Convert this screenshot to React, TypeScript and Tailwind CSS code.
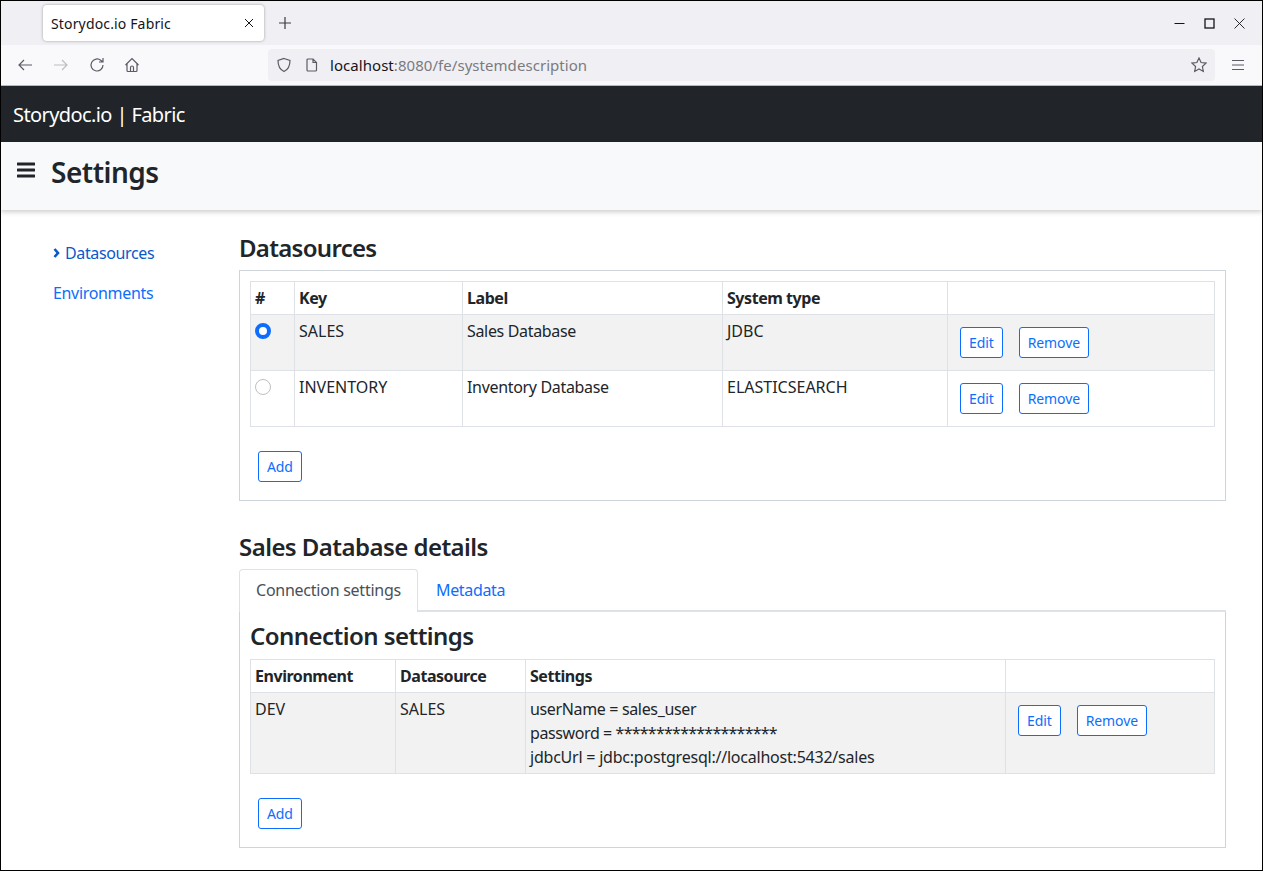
import React from 'react';

const FONT = "font-['Noto_Sans','Liberation_Sans',sans-serif]";
const BLUE = 'text-[#0d6efd]';

const OutlineButton = ({ label }: { label: string }) => (
  <button className={`h-[31px] px-2 rounded-[3px] border border-[#0d6efd] bg-white text-[14px] leading-[21px] tracking-[-0.1px] ${BLUE}`}>
    {label}
  </button>
);

const RowActions = () => (
  <div className="flex gap-4">
    <OutlineButton label="Edit" />
    <OutlineButton label="Remove" />
  </div>
);

const Th = ({ children }: { children?: React.ReactNode }) => (
  <th className="border border-[#dee2e6] px-1 py-1 h-[33px] text-left font-bold text-[16px] leading-6 tracking-[-0.45px] align-top text-[#212529]">{children}</th>
);

const Td = ({ children, caps }: { children?: React.ReactNode; caps?: boolean }) => (
  <td className={`border border-[#dee2e6] px-1 py-1 align-top text-[16px] leading-6 text-[#212529] ${caps ? 'tracking-[0px]' : 'tracking-[-0.33px]'}`}>{children}</td>
);

const Radio = ({ checked }: { checked?: boolean }) =>
  checked ? (
    <span className="block w-4 h-4 mt-[4px] rounded-full border-[4px] border-[#0d6efd] bg-white" />
  ) : (
    <span className="block w-4 h-4 mt-[4px] rounded-full border border-[#bfbfbf] bg-white" />
  );

const datasources = [
  { key: 'SALES', label: 'Sales Database', type: 'JDBC', checked: true },
  { key: 'INVENTORY', label: 'Inventory Database', type: 'ELASTICSEARCH', checked: false },
];

const BrowserChrome = () => (
  <div className="shrink-0">
    <div className="h-[44px] bg-[#f0f0f4] flex items-center">
      <div className="ml-[42px] w-[221px] h-[36px] bg-white rounded-[4px] shadow-[0_0_3px_rgba(0,0,0,0.35)] flex items-center justify-between pl-[8px] pr-[10px]">
        <span className="text-[14px] tracking-[0.15px] text-[#15141a]">Storydoc.io Fabric</span>
        <svg width="10" height="10" viewBox="0 0 10 10" stroke="#15141a" strokeWidth="1"><path d="M1 1l8 8M9 1l-8 8" /></svg>
      </div>
      <svg className="ml-[15px]" width="12" height="12" viewBox="0 0 12 12" stroke="#3a3a40" strokeWidth="1.2"><path d="M6 0v12M0 6h12" /></svg>
      <div className="ml-auto flex items-center gap-[19px] pr-[17px]">
        <svg width="11" height="11" viewBox="0 0 11 11" stroke="#15141a" strokeWidth="1"><path d="M0.500 5.500h10" /></svg>
        <svg width="11" height="11" viewBox="0 0 11 11" stroke="#15141a" strokeWidth="1.3" fill="none"><rect x="1" y="1" width="9" height="9" /></svg>
        <svg width="11" height="11" viewBox="0 0 11 11" stroke="#15141a" strokeWidth="0.9"><path d="M0.500 0.500l10 10M10.500 0.500l-10 10" /></svg>
      </div>
    </div>
    <div className="h-[41px] bg-[#f9f9fb] border-b border-[#b8b8bc] flex items-center">
      <svg className="ml-[16px]" width="16" height="16" viewBox="0 0 16 16" stroke="#5b5b66" strokeWidth="1.2" fill="none"><path d="M15 8H2M7 3L2 8l5 5" /></svg>
      <svg className="ml-[20px]" width="16" height="16" viewBox="0 0 16 16" stroke="#bdbdc2" strokeWidth="1.2" fill="none"><path d="M1 8h13M9 3l5 5-5 5" /></svg>
      <svg className="ml-[20px]" width="16" height="16" viewBox="0 0 16 16" stroke="#5b5b66" strokeWidth="1.2" fill="none"><path d="M14 8a6 6 0 1 1-2-4.500L14 5M14 1v4h-4" /></svg>
      <svg className="ml-[19px]" width="16" height="16" viewBox="0 0 16 16" stroke="#5b5b66" strokeWidth="1.2" fill="none"><path d="M1.500 8L8 1.500 14.500 8M3 7v6.500a1 1 0 0 0 1 1h8a1 1 0 0 0 1-1V7M6.500 14.500v-4a1.500 1.500 0 0 1 3 0v4" /></svg>
      <div className="ml-[128px] w-[947px] h-[32px] bg-[#f0f0f4] rounded-[4px] flex items-center pl-[8px] pr-[8px]">
        <svg width="16" height="16" viewBox="0 0 16 16" stroke="#5b5b66" strokeWidth="1.2" fill="none"><path d="M8 1.500l6 2c0 5-1.500 9-6 11-4.500-2-6-6-6-11z" /></svg>
        <svg className="ml-[13px]" width="14" height="14" viewBox="0 0 14 14" stroke="#5b5b66" strokeWidth="1.2" fill="none"><path d="M3 1h5l3.500 3.500V12a1 1 0 0 1-1 1H3a1 1 0 0 1-1-1V2a1 1 0 0 1 1-1zM8 1v3.500h3.500" /></svg>
        <span className="ml-[11px] pt-[1px] text-[15px] tracking-[0.05px] text-[#15141a]">localhost<span className="text-[#7a7a80]">:8080/fe/systemdescription</span></span>
        <svg className="ml-auto" width="16" height="16" viewBox="0 0 16 16" stroke="#5b5b66" strokeWidth="1.2" fill="none"><path d="M8 1l2.100 4.500 4.900.6-3.600 3.400.9 4.900L8 11.900 3.700 14.400l.9-4.900L1 6.100l4.900-.6z" /></svg>
      </div>
      <svg className="ml-[16px]" width="14" height="12" viewBox="0 0 14 12" stroke="#5b5b66" strokeWidth="1.2"><path d="M1 1.500h12M1 6h12M1 10.500h12" /></svg>
    </div>
  </div>
);

export default function App() {
  return (
    <div className={`${FONT} w-[1263px] h-[871px] overflow-hidden flex flex-col bg-white border border-black`}>
      <BrowserChrome />
      <nav className="h-[56px] shrink-0 bg-[#212529] flex items-center pl-3 pt-[2px]">
        <span className="text-white text-[20px] tracking-[-0.6px]">Storydoc.io | Fabric</span>
      </nav>
      <header className="h-[68px] shrink-0 bg-[#f8f9fa] shadow-[0_2px_5px_rgba(0,0,0,0.2)] flex items-center">
        <svg className="ml-[16px] mb-[12px]" width="18" height="16" viewBox="0 0 18 16" fill="#212529"><rect y="0.500" width="18" height="3" rx="0.500" /><rect y="6.500" width="18" height="3" rx="0.500" /><rect y="12.500" width="18" height="3" rx="0.500" /></svg>
        <h1 className="ml-[16px] mb-[8px] text-[28px] font-semibold text-[#212529] tracking-[-0.5px]">Settings</h1>
      </header>
      <div className="flex flex-1 min-h-0">
        <aside className="w-[238px] shrink-0 pl-[52px] pt-[31px]">
          <div className="flex items-center h-6 text-[#0a58ca] text-[16px] tracking-[-0.37px]">
            <svg className="mr-[4px]" width="8" height="10" viewBox="0 0 8 10" fill="none" stroke="#0a58ca" strokeWidth="2.600"><path d="M1.500 1l3.500 4-3.500 4" /></svg>
            Datasources
          </div>
          <div className={`mt-4 h-6 text-[16px] tracking-[-0.33px] ${BLUE}`}>Environments</div>
        </aside>
        <main className="w-[987px] pt-[23px]">
          <h2 className="text-[24px] leading-[29px] font-semibold text-[#212529] tracking-[-0.7px] mb-[8px]">Datasources</h2>
          <section className="border border-[#ced4da] p-[10px] h-[231px]">
            <table className="w-[965px] border-collapse table-fixed">
              <colgroup>
                <col className="w-[44px]" /><col className="w-[168px]" /><col className="w-[260px]" /><col className="w-[225px]" /><col />
              </colgroup>
              <thead>
                <tr><Th>#</Th><Th>Key</Th><Th>Label</Th><Th>System type</Th><Th /></tr>
              </thead>
              <tbody>
                {datasources.map((d) => (
                  <tr key={d.key} className={`h-[56px] ${d.checked ? 'bg-[#f2f2f2]' : ''}`}>
                    <Td><Radio checked={d.checked} /></Td>
                    <Td caps>{d.key}</Td>
                    <Td>{d.label}</Td>
                    <Td caps>{d.type}</Td>
                    <td className="border border-[#dee2e6] pl-3 pt-3 align-top"><RowActions /></td>
                  </tr>
                ))}
              </tbody>
            </table>
            <div className="mt-6 ml-2"><OutlineButton label="Add" /></div>
          </section>

          <h2 className="mt-[31px] text-[24px] leading-[29px] font-semibold text-[#212529] tracking-[-0.55px]">Sales Database details</h2>
          <div className="mt-[8px] flex h-[43px] border-b-2 border-[#dee2e6]">
            <div className="h-[43px] w-[179px] pb-[2px] flex items-center justify-center bg-white border border-[#dee2e6] border-b-0 rounded-t-[4px] text-[#495057] text-[16px] tracking-[-0.25px] z-10">Connection settings</div>
            <div className={`ml-[2px] h-[41px] px-4 flex items-center text-[16px] tracking-[-0.35px] ${BLUE}`}>Metadata</div>
          </div>
          <section className="border border-[#ced4da] border-t-0 px-[10px] h-[236px]">
            <h3 className="pt-[9px] text-[24px] leading-[29px] font-semibold text-[#212529] tracking-[-0.55px] mb-[9px]">Connection settings</h3>
            <table className="w-[965px] border-collapse table-fixed">
              <colgroup>
                <col className="w-[145px]" /><col className="w-[130px]" /><col className="w-[480px]" /><col />
              </colgroup>
              <thead>
                <tr><Th>Environment</Th><Th>Datasource</Th><Th>Settings</Th><Th /></tr>
              </thead>
              <tbody>
                <tr className="bg-[#f2f2f2]">
                  <Td caps>DEV</Td>
                  <Td caps>SALES</Td>
                  <Td>
                    <div className="tracking-[-0.35px]">userName = sales_user</div>
                    <div className="tracking-[-0.4px]">password = <span className="tracking-[-0.75px]">********************</span></div>
                    <div className="tracking-[-0.22px]">jdbcUrl = jdbc:postgresql://localhost:5432/sales</div>
                  </Td>
                  <td className="border border-[#dee2e6] pl-3 pt-3 align-top"><RowActions /></td>
                </tr>
              </tbody>
            </table>
            <div className="mt-6 ml-2"><OutlineButton label="Add" /></div>
          </section>
        </main>
      </div>
    </div>
  );
}
